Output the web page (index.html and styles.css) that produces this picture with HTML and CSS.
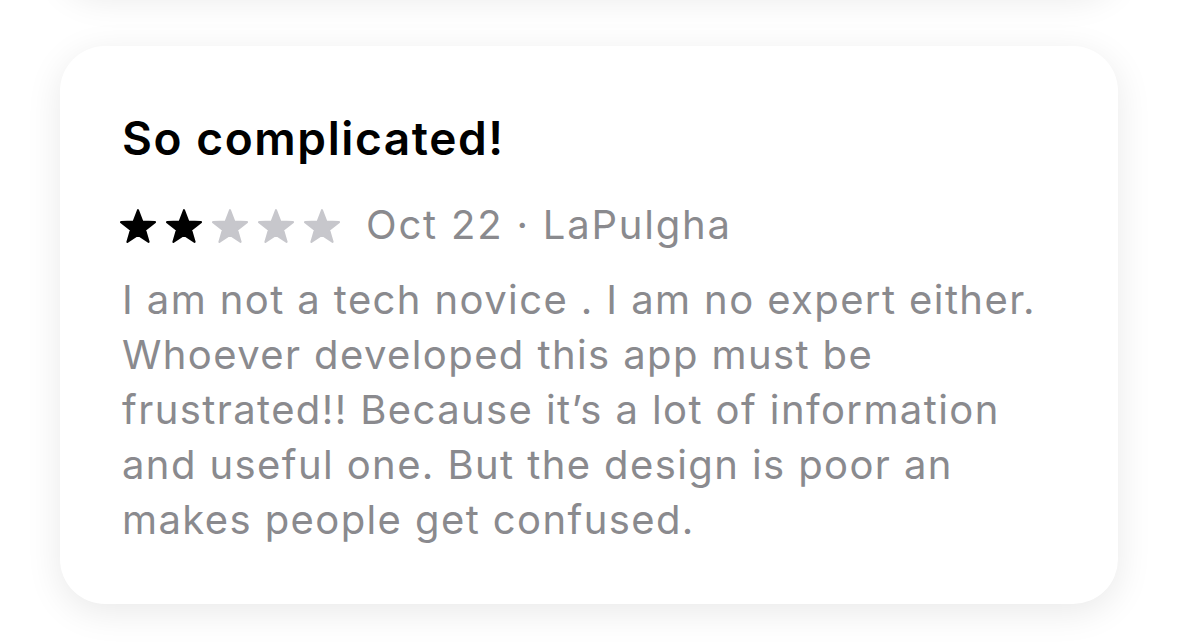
FILE: index.html
```html
<!DOCTYPE html>
<html lang="en">
<head>
<meta charset="utf-8">
<title>Review</title>
<link rel="stylesheet" href="styles.css">
</head>
<body>
<div class="page">
  <div class="prev-card"></div>
  <article class="card">
    <h2 class="title">So complicated!</h2>
    <div class="meta">
      <div class="stars">
        <svg class="star on" viewBox="0 0 36 35"><polygon points="18,1.1 22.4,12.5 35,13.1 25.1,20.9 28.6,32.9 18,26 7.4,32.9 10.9,20.9 1,13.1 13.6,12.5"/></svg>
        <svg class="star on" viewBox="0 0 36 35"><polygon points="18,1.1 22.4,12.5 35,13.1 25.1,20.9 28.6,32.9 18,26 7.4,32.9 10.9,20.9 1,13.1 13.6,12.5"/></svg>
        <svg class="star off" viewBox="0 0 36 35"><polygon points="18,1.1 22.4,12.5 35,13.1 25.1,20.9 28.6,32.9 18,26 7.4,32.9 10.9,20.9 1,13.1 13.6,12.5"/></svg>
        <svg class="star off" viewBox="0 0 36 35"><polygon points="18,1.1 22.4,12.5 35,13.1 25.1,20.9 28.6,32.9 18,26 7.4,32.9 10.9,20.9 1,13.1 13.6,12.5"/></svg>
        <svg class="star off" viewBox="0 0 36 35"><polygon points="18,1.1 22.4,12.5 35,13.1 25.1,20.9 28.6,32.9 18,26 7.4,32.9 10.9,20.9 1,13.1 13.6,12.5"/></svg>
      </div>
      <span class="byline">Oct 22 · LaPulgha</span>
    </div>
    <p class="body">I am not a tech novice . I am no expert either. Whoever developed this app must be frustrated!! Because it’s a lot of information and useful one. But the design is poor an makes people get confused.</p>
  </article>
</div>
</body>
</html>
```

FILE: styles.css
```css
* { box-sizing: border-box; }
html, body {
  margin: 0;
  padding: 0;
  background: #ffffff;
  font-family: Inter, "Liberation Sans", sans-serif;
  overflow: hidden;
}
.page {
  width: 1179px;
  height: 642px;
  padding: 0 61px 0 60px;
  display: flex;
  flex-direction: column;
}
.prev-card {
  height: 80px;
  margin-top: -90px;
  background: #fff;
  border-radius: 45px;
  box-shadow: 0 8px 36px rgba(0, 0, 0, 0.09);
}
.card {
  margin-top: 56px;
  height: 558px;
  background: #fff;
  border-radius: 45px;
  box-shadow: 0 8px 36px rgba(0, 0, 0, 0.09);
  padding: 64px 40px 0 62px;
}
.title {
  margin: 0;
  font-size: 46px;
  line-height: 56px;
  font-weight: 600;
  color: #000;
  letter-spacing: 1.6px;
}
.meta {
  display: flex;
  align-items: center;
  gap: 26px;
  margin-top: 34px;
  height: 50px;
}
.stars {
  display: flex;
  gap: 10px;
  margin-left: -2px;
  margin-top: 2px;
}
.star {
  width: 36px;
  height: 35px;
  display: block;
}
.star polygon {
  stroke-width: 2;
  stroke-linejoin: round;
}
.star.on polygon { fill: #000; stroke: #000; }
.star.off polygon { fill: #c7c7cc; stroke: #c7c7cc; }
.byline {
  font-size: 40px;
  line-height: 50px;
  color: #8a8a8e;
  letter-spacing: 1.8px;
}
.body {
  margin: 22px 0 0 0;
  font-size: 40px;
  line-height: 55px;
  color: #8a8a8e;
  letter-spacing: 1.4px;
  width: 950px;
}
```
